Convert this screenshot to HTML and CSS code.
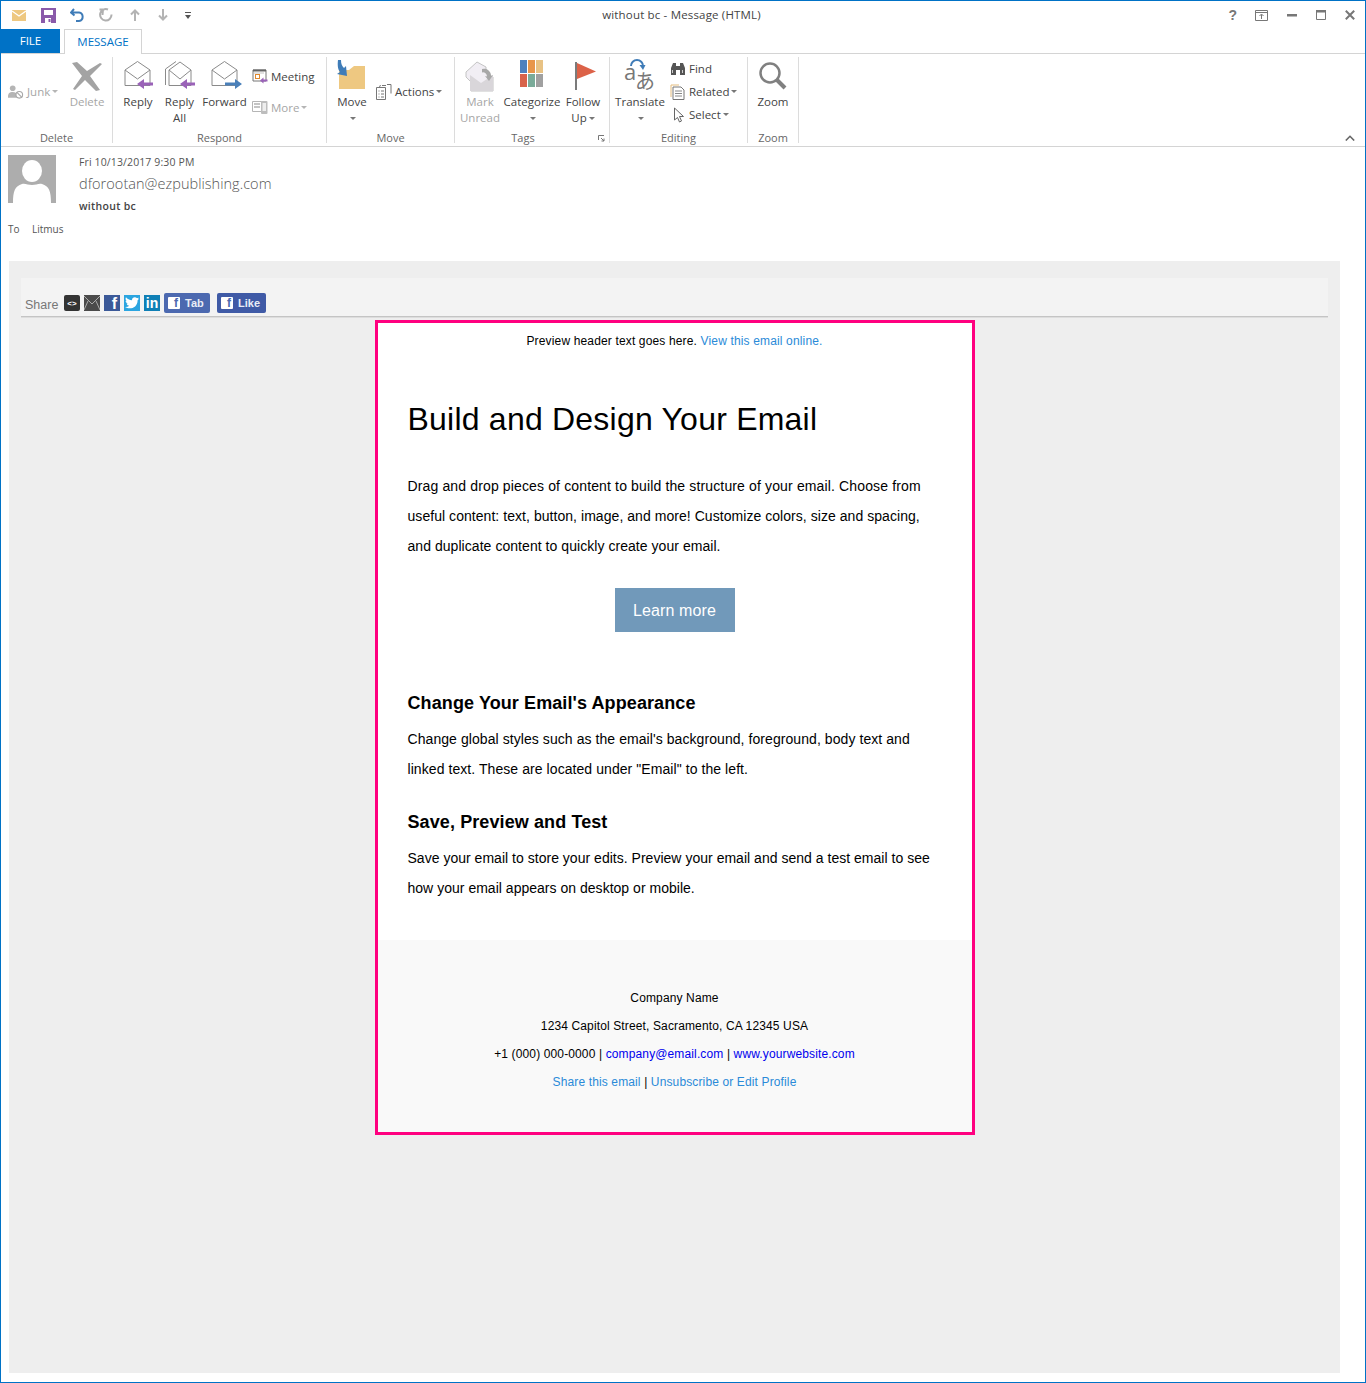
FILE: index.html
```html
<!DOCTYPE html>
<html>
<head>
	<meta charset="UTF-8">
	<title>without bc - Message (HTML)</title>
	<link rel="stylesheet" href="styles.css">
</head>
<body>
<div class="window">
	<div class="titlebar">
		<div class="qat">
			<svg class="qat-env" width="14" height="11" viewBox="0 0 14 11"><rect width="14" height="11" fill="#eec881"/><path d="M0 1l7 5 7-5" fill="none" stroke="#fff" stroke-width="1.3"/></svg>
			<svg class="qat-save" width="15" height="15" viewBox="0 0 15 15"><path d="M0 0h15v15H0z" fill="#8a5aaa"/><rect x="3" y="2" width="9" height="5" fill="#fff"/><rect x="4" y="10" width="6" height="5" fill="#fff"/><rect x="7.500" y="11" width="2" height="3" fill="#8a5aaa"/></svg>
			<svg class="qat-undo" width="15" height="14" viewBox="0 0 15 14"><path d="M4 1L1 4.500l3.500 3M1.500 4.500H9a4.300 4.300 0 0 1 0 8.500H6" fill="none" stroke="#3f7cb8" stroke-width="2"/></svg>
			<svg class="qat-redo" width="14" height="14" viewBox="0 0 14 14"><path d="M9 1.500a5.700 5.700 0 1 0 3.500 5M4 1.500L3.500 7M4 1.500h-3.500" fill="none" stroke="#b0b0b0" stroke-width="2"/></svg>
			<svg class="qat-arrow" width="10" height="12" viewBox="0 0 10 12"><path d="M5 12V1.500M1 5.500l4-4 4 4" fill="none" stroke="#b4b4b4" stroke-width="2"/></svg>
			<svg class="qat-arrow" width="10" height="12" viewBox="0 0 10 12"><path d="M5 0v10.500M1 6.500l4 4 4-4" fill="none" stroke="#b4b4b4" stroke-width="2"/></svg>
			<svg class="qat-more" width="6" height="7" viewBox="0 0 6 7"><path d="M0 0h6v1H0zM0 3h6L3 7z" fill="#555"/></svg>
		</div>
		<div class="doc-title">without bc - Message (HTML)</div>
		<div class="winctl">
			<span class="help">?</span>
			<svg width="13" height="11" viewBox="0 0 13 11"><path d="M.5.500h12v10H.5zM.5 2.500h12M6.500 9V4.500M4.500 6l2-2 2 2" fill="none" stroke="#777"/></svg>
			<svg width="10" height="3" viewBox="0 0 10 3"><rect y="0" width="10" height="2.500" fill="#777"/></svg>
			<svg width="10" height="10" viewBox="0 0 10 10"><path d="M.5.500h9v9h-9z" fill="none" stroke="#777"/><rect width="10" height="2.500" fill="#777"/></svg>
			<svg width="10" height="10" viewBox="0 0 10 10"><path d="M.8.800l8.400 8.400M9.200.800L.8 9.200" stroke="#777" stroke-width="2"/></svg>
		</div>
	</div>

	<div class="tabs">
		<div class="tab-file">FILE</div>
		<div class="tab-message">MESSAGE</div>
	</div>

	<div class="ribbon">
		<div class="group g-delete">
			<div class="group-body">
				<div class="stack w-junk">
					<div class="small off">
						<svg width="16" height="16" viewBox="0 0 17 16"><circle cx="5" cy="4" r="3" fill="#b5b5b5"/><path d="M0 13c0-4 2-5 5-5s4 1 4 3v3H0z" fill="#b5b5b5"/><circle cx="12" cy="11" r="3.500" fill="#fff" stroke="#a8a8a8" stroke-width="1.200"/><path d="M9.500 8.500l5 5" stroke="#a8a8a8" stroke-width="1.200"/></svg>
						<span>Junk</span><i class="caret"></i>
					</div>
				</div>
				<div class="large off w-delete">
					<div class="large-icon"><svg width="32" height="32" viewBox="0 0 32 32"><path d="M1 3l5-1 10 9 13-8 2 1-12 12 10 14-4 1-11-11-10 10-2-1 9-13z" fill="#a3a3a3"/></svg></div>
					<div class="large-text">Delete</div>
				</div>
			</div>
			<div class="group-label">Delete</div>
		</div>

		<div class="group g-respond">
			<div class="group-body">
				<div class="large w-reply">
					<div class="large-icon"><svg class="nudge-r" width="32" height="32" viewBox="0 0 32 32"><path d="M2 10L14.500 1.500 27 10v15.500H2z" fill="#fff" stroke="#8a8a8a"/><path d="M2 10l12.500 9L27 10" fill="none" stroke="#8a8a8a"/><path d="M14 24l7-5v3.500h9v3h-9V29z" fill="#9a62b8"/></svg></div>
					<div class="large-text">Reply</div>
				</div>
				<div class="large w-replyall">
					<div class="large-icon"><svg width="32" height="32" viewBox="0 0 32 32"><path d="M1.500 25V9L12 1.500" fill="none" stroke="#8a8a8a"/><path d="M5 10L16 2l11 8v15.500H5z" fill="#fff" stroke="#8a8a8a"/><path d="M5 10l11 9 11-9" fill="none" stroke="#8a8a8a"/><path d="M16 24l7-5v3.500h8v3h-8V29z" fill="#9a62b8"/></svg></div>
					<div class="large-text">Reply<br>All</div>
				</div>
				<div class="large w-forward">
					<div class="large-icon"><svg class="nudge-f" width="32" height="32" viewBox="0 0 32 32"><path d="M1 10L13.500 1.500 26 10v15.500H1z" fill="#fff" stroke="#8a8a8a"/><path d="M1 10l12.500 9L26 10" fill="none" stroke="#8a8a8a"/><path d="M31 24l-7-5v3.500H14v3h10V29z" fill="#4a80ba"/></svg></div>
					<div class="large-text">Forward</div>
				</div>
				<div class="stack stack-respond">
					<div class="small">
						<svg width="16" height="16" viewBox="0 0 16 16"><path d="M1 2h13v11H1z" fill="#fff" stroke="#777"/><path d="M1 1.500h13v2H1z" fill="#666"/><path d="M3 4.500v1M5 4.500v1M7 4.500v1M9 4.500v1M11 4.500v1" stroke="#888"/><rect x="3.500" y="6.500" width="4" height="4" fill="#fff" stroke="#e0892f"/><path d="M8 12.500l3.500-3v2h4v2h-4v2z" fill="#9a62b8"/></svg>
						<span>Meeting</span>
					</div>
					<div class="small off">
						<svg width="16" height="16" viewBox="0 0 16 16"><path d="M.5 2.500h9v10h-9z" fill="#fff" stroke="#b5b5b5"/><path d="M2 5h6M2 8h6" stroke="#c4c4c4" stroke-width="2"/><rect x="9" y="2" width="6.500" height="13" rx="1" fill="#bdbdbd"/><rect x="10.500" y="4" width="3.500" height="8" fill="#eee"/></svg>
						<span>More</span><i class="caret"></i>
					</div>
				</div>
			</div>
			<div class="group-label">Respond</div>
		</div>

		<div class="group g-move">
			<div class="group-body">
				<div class="large w-move">
					<div class="large-icon"><svg width="32" height="32" viewBox="0 0 32 32"><path d="M3 10h10l5-4h11v23H3z" fill="#eec881"/><path d="M2 0h3c0 4 1 6 3 8l2-2 1 10-10-2 3-2C1.500 9 1.500 4 2 0z" fill="#3f7cb8"/></svg></div>
					<div class="large-text">Move<br><i class="caret"></i></div>
				</div>
				<div class="stack stack-actions">
					<div class="small">
						<svg width="16" height="16" viewBox="0 0 16 16"><path d="M.5 3.500h9v12h-9zM3 2.500l2-1M6 1.500h4M11 .500h4v9" fill="#fff" stroke="#777"/><path d="M2.500 7h1M5 7h3M2.500 10h1M5 10h3M2.500 13h1M5 13h3" stroke="#777"/></svg>
						<span>Actions</span><i class="caret"></i>
					</div>
				</div>
			</div>
			<div class="group-label">Move</div>
		</div>

		<div class="group g-tags">
			<div class="group-body">
				<div class="large off w-mark">
					<div class="large-icon"><svg width="32" height="32" viewBox="0 0 32 32"><path d="M2 12L13 2l9 5v6L29 17v14H7V22l-5-5z" fill="#f1eef4" stroke="#c4c4c4"/><path d="M6 31V15l11 8 12-8v16z" fill="#d9d6da"/><path d="M18 9a7 7 0 0 1 9 7l2-1-4 6-4-5 2 .5a4 4 0 0 0-5-4z" fill="#a8a8a8"/></svg></div>
					<div class="large-text">Mark<br>Unread</div>
				</div>
				<div class="large w-cat">
					<div class="large-icon">
						<div class="swatches">
							<i class="s1"></i><i class="s2"></i><i class="s3"></i>
							<i class="s4"></i><i class="s5"></i><i class="s6"></i>
						</div>
					</div>
					<div class="large-text">Categorize<br><i class="caret"></i></div>
				</div>
				<div class="large w-follow">
					<div class="large-icon"><svg width="32" height="32" viewBox="0 0 32 32"><rect x="8" y="2" width="2" height="28" fill="#7b7b7b"/><path d="M10 3l19 8.500L10 19z" fill="#dc6248"/></svg></div>
					<div class="large-text">Follow<br>Up<i class="caret"></i></div>
				</div>
			</div>
			<div class="group-label">Tags</div>
			<svg class="launcher" width="7" height="7" viewBox="0 0 7 7"><path d="M.5 5V.500H6M3 3l3 3M6 3.500V6H3.500" fill="none" stroke="#777"/></svg>
		</div>

		<div class="group g-editing">
			<div class="group-body">
				<div class="large w-translate">
					<div class="large-icon"><svg class="translate-icon" width="32" height="32" viewBox="0 0 32 32"><path d="M7 6a6 6 0 0 1 12 0" fill="none" stroke="#3f7cb8" stroke-width="2"/><path d="M15.500 5l6 0-2.500 5z" fill="#3f7cb8"/><text x="0" y="20" class="tr-a">a</text><text x="11" y="29" class="tr-b">あ</text></svg></div>
					<div class="large-text">Translate<br><i class="caret"></i></div>
				</div>
				<div class="stack stack-edit">
					<div class="small">
						<svg width="16" height="14" viewBox="0 0 16 14"><path d="M1 13V6l2-5h3v12zM10 13V1h3l2 5v7z" fill="#555"/><rect x="6" y="4" width="4" height="4" fill="#555"/><path d="M2.500 8v3M12.500 8v3" stroke="#ccc"/></svg>
						<span>Find</span>
					</div>
					<div class="small">
						<svg width="16" height="16" viewBox="0 0 16 16"><path d="M1 13V1h8" fill="none" stroke="#e5bd7e"/><path d="M3 3h8l3 3v9.500H3z" fill="#fff" stroke="#777"/><path d="M5 7h7M5 9.500h7M5 12h7" stroke="#888"/></svg>
						<span>Related</span><i class="caret"></i>
					</div>
					<div class="small">
						<svg width="16" height="16" viewBox="0 0 16 16"><path d="M4.500 1v12l3-2.500 2 4.500 2-1-2-4.500h4z" fill="#fff" stroke="#666"/></svg>
						<span>Select</span><i class="caret"></i>
					</div>
				</div>
			</div>
			<div class="group-label">Editing</div>
		</div>

		<div class="group g-zoom">
			<div class="group-body">
				<div class="large w-zoom">
					<div class="large-icon"><svg class="zoom-icon" width="32" height="32" viewBox="0 0 32 32"><circle cx="14" cy="13" r="9.500" fill="none" stroke="#808080" stroke-width="2.500"/><path d="M21 20l8 8" stroke="#808080" stroke-width="4"/></svg></div>
					<div class="large-text">Zoom</div>
				</div>
			</div>
			<div class="group-label">Zoom</div>
		</div>

		<svg class="collapse" width="10" height="6" viewBox="0 0 10 6"><path d="M.800 5.500L5 1.300l4.200 4.200" fill="none" stroke="#666" stroke-width="1.600"/></svg>
	</div>

	<div class="msg-head">
		<div class="msg-top">
			<div class="avatar"><svg width="48" height="48" viewBox="0 0 48 48"><rect width="48" height="48" fill="#adadad"/><ellipse cx="24" cy="16" rx="10" ry="11" fill="#fff"/><path d="M5 48c0-12 2-17 9-19 3-1 6 1 10 1s7-2 10-1c7 2 9 7 9 19z" fill="#fff"/></svg></div>
			<div class="msg-meta">
				<div class="msg-date">Fri 10/13/2017 9:30 PM</div>
				<div class="msg-from">dforootan@ezpublishing.com</div>
				<div class="msg-subject">without bc</div>
			</div>
		</div>
		<div class="msg-to"><span class="to-label">To</span><span>Litmus</span></div>
	</div>

	<div class="reading">
		<div class="canvas">
			<div class="sharebar">
				<span class="share-word">Share</span>
				<span class="soc soc-code">&lt;&gt;</span>
				<span class="soc soc-mail"><svg width="16" height="16" viewBox="0 0 16 16"><path d="M0 1l8 8 8-8M0 15l4-9M16 15l-4-9" fill="none" stroke="#aaa"/></svg></span>
				<span class="soc soc-fb">f</span>
				<span class="soc soc-tw"><svg width="14" height="12" viewBox="0 0 14 12"><path d="M14 1.500c-.5.300-1 .4-1.600.5.600-.4 1-.900 1.200-1.600-.5.300-1.100.6-1.800.7A2.900 2.900 0 0 0 6.900 3.300C4.500 3.200 2.400 2 1 .3c-.8 1.300-.4 3 .9 3.900-.5 0-.9-.1-1.300-.4 0 1.400 1 2.600 2.300 2.900-.4.100-.9.100-1.300 0 .4 1.200 1.400 2 2.700 2A5.800 5.800 0 0 1 0 10c4.700 3 12.600 1 12.600-6.800.6-.4 1-.9 1.400-1.700z" fill="#fff"/></svg></span>
				<span class="soc soc-in">in</span>
				<span class="fb-btn fb-tab"><b class="fb-f">f</b>Tab</span>
				<span class="fb-btn fb-like"><b class="fb-f">f</b>Like</span>
			</div>

			<div class="email">
				<p class="preview">Preview header text goes here. <a class="link">View this email online.</a></p>
				<h1>Build and Design Your Email</h1>
				<p class="body-text"><span class="wide">Drag and drop pieces of content to build the structure of your email. Choose from</span><br>useful content: text, button, image, and more! Customize colors, size and spacing,<br>and duplicate content to quickly create your email.</p>
				<a class="learn">Learn more</a>
				<h2 class="sub-first">Change Your Email's Appearance</h2>
				<p class="body-text sub-text sub-change">Change global styles such as the email's background, foreground, body text and<br>linked text. These are located under "Email" to the left.</p>
				<h2 class="sub-next">Save, Preview and Test</h2>
				<p class="body-text sub-text">Save your email to store your edits. Preview your email and send a test email to see<br>how your email appears on desktop or mobile.</p>
				<div class="footer">
					<p>Company Name</p>
					<p>1234 Capitol Street, Sacramento, CA 12345 USA</p>
					<p>+1 (000) 000-0000 | <a class="blue">company@email.com</a> | <a class="blue">www.yourwebsite.com</a></p>
					<p><a class="link">Share this email</a> | <a class="link">Unsubscribe or Edit Profile</a></p>
				</div>
			</div>
		</div>
	</div>
</div>
</body>
</html>
```

FILE: styles.css
```css
html{background:#fff;}
body{margin:0;font:12px "Open Sans","Noto Sans",sans-serif;color:#444;}
p,h1,h2{margin:0;}
.window{box-sizing:border-box;width:1366px;height:1383px;border:1px solid #0072c6;background:#fff;overflow:hidden;}

/* title bar */
.titlebar{display:grid;grid-template-columns:1fr auto 1fr;align-items:center;height:28px;}
.qat{display:flex;align-items:center;padding-left:11px;height:28px;}
.qat svg{display:block;flex:none;}
.qat-env{margin-right:15px;}
.qat-save{margin-right:14px;}
.qat-undo{margin-right:14px;}
.qat-redo{margin-right:17px;}
.qat-arrow{margin-right:18px;}
.qat-more{margin-left:-1px;}
.doc-title{padding-right:3px;font-size:11.5px;line-height:28px;letter-spacing:.17px;color:#444;}
.winctl{display:flex;align-items:center;justify-content:flex-end;gap:19px;padding-right:10px;height:28px;}
.winctl svg{display:block;}
.help{font:bold 14px "Liberation Sans",sans-serif;color:#777;margin-right:-1px;}

/* tabs */
.tabs{display:flex;height:25px;border-bottom:1px solid #d4d4d4;box-sizing:border-box;}
.tab-file{width:59px;height:24px;margin-right:4px;background:#0072c6;color:#fff;text-align:center;font-size:11.5px;line-height:24px;}
.tab-message{box-sizing:border-box;width:78px;height:25px;border:1px solid #d4d4d4;border-bottom:0;background:#fff;color:#0072c6;text-align:center;font-size:11.5px;line-height:24px;}

/* ribbon */
.ribbon{box-sizing:border-box;display:flex;height:93px;padding-top:3px;border-bottom:1px solid #d4d4d4;position:relative;}
.group{box-sizing:border-box;position:relative;display:flex;flex-direction:column;height:86px;border-right:1px solid #dcdcdc;}
.g-delete{width:112px;padding-left:7px;}
.g-respond{width:214px;padding-left:5px;}
.g-move{width:128px;padding-left:7px;}
.g-tags{width:155px;padding-left:3px;}
.g-editing{width:138px;padding-left:3px;}
.g-zoom{width:51px;padding-left:0;}
.group-body{display:flex;height:74px;}
.group-label{height:12px;margin-left:-7px;text-align:center;font-size:11px;line-height:14px;color:#666;}
.g-respond .group-label{margin-left:-5px;}
.g-tags .group-label{margin-left:-3px;padding-right:18px;}
.g-editing .group-label{margin-left:-3px;}
.g-zoom .group-label{margin-left:0;}
.launcher{position:absolute;right:4px;bottom:1px;}
.collapse{position:absolute;right:10px;bottom:5px;}

.large{flex:none;text-align:center;font-size:11.5px;line-height:16px;white-space:nowrap;}
.large-icon{display:flex;justify-content:center;height:34px;padding-top:3px;}
.large-icon svg{display:block;flex:none;}
.large-text{height:32px;}
.off{color:#a6a6a6;}
.nudge-r{margin-left:2px;}
.nudge-f{margin-left:4px;}
.zoom-icon{margin-right:2px;}
.translate-icon{overflow:visible;}
.w-delete{width:42px;}
.w-reply{width:40px;}
.w-replyall{width:43px;}
.w-forward{width:47px;}
.w-move{width:36px;}
.w-mark{width:44px;}
.w-cat{width:60px;}
.w-follow{width:42px;}
.w-translate{width:54px;}
.w-zoom{width:50px;}
.w-junk{width:58px;}

.stack{display:flex;flex-direction:column;justify-content:center;gap:8px;height:69px;}
.stack-respond{margin-left:4px;}
.stack-actions{margin-left:6px;}
.stack-edit{gap:0;margin-left:3px;}
.small{display:flex;align-items:center;gap:3px;height:23px;font-size:11.5px;white-space:nowrap;}
.small svg{display:block;flex:none;}

.caret{display:inline-block;width:0;height:0;margin-left:3px;border:3px solid transparent;border-top-color:#777;border-bottom:0;vertical-align:middle;}
.large-text .caret{margin-left:2px;}
.small .caret{margin-left:-1px;}
.off .caret{border-top-color:#b5b5b5;}

.swatches{display:grid;grid-template-columns:repeat(3,7px);grid-template-rows:repeat(2,13px);gap:1px;margin-right:1px;}
.swatches i{display:block;}
.s1{background:#4f81bd;}
.s2{background:#e8964a;}
.s3{background:#e8c284;}
.s4{background:#d8634a;}
.s5{background:#7aab99;}
.s6{background:#a0a0a0;}
.tr-a{font:22px "Open Sans",sans-serif;fill:#777;}
.tr-b{font:20px "Noto Sans CJK JP",sans-serif;fill:#777;}

/* message header */
.msg-head{box-sizing:border-box;height:114px;padding:8px 0 0 7px;}
.msg-top{display:flex;gap:23px;}
.avatar{width:48px;height:48px;}
.avatar svg{display:block;}
.msg-date{font-size:10.5px;line-height:14px;letter-spacing:.12px;color:#555;}
.msg-from{font-size:14.5px;font-weight:300;line-height:30px;letter-spacing:.04px;color:#555;}
.msg-subject{font-size:10.5px;font-weight:600;line-height:14px;letter-spacing:.3px;color:#444;}
.msg-to{margin-top:9px;font-size:10px;line-height:14px;color:#555;}
.to-label{display:inline-block;width:24px;}

/* reading pane */
.reading{padding-left:8px;}
.canvas{box-sizing:border-box;width:1331px;height:1112px;padding:17px 12px 0;background:#eee;}
.sharebar{box-sizing:border-box;display:flex;align-items:flex-end;height:39px;padding:0 0 3px 4px;background:#f3f3f3;border-bottom:1px solid #c4c4c4;box-shadow:0 1px #ddd;font-family:"Liberation Sans",Arial,sans-serif;}
.share-word{width:39px;font-size:12.5px;line-height:16px;color:#777;}
.soc{display:flex;align-items:center;justify-content:center;width:16px;height:16px;margin:0 4px 2px 0;color:#fff;font-weight:700;}
.soc-code{background:#333;border-radius:2px;font-size:8px;}
.soc-mail{background:#4a4a4a;}
.soc-fb{background:#3b5998;font-size:16px;align-items:flex-end;justify-content:flex-end;padding-right:3px;box-sizing:border-box;line-height:15px;}
.soc-tw{background:#2ba5e0;}
.soc-in{background:#0f7fb5;font-size:14px;}
.fb-btn{box-sizing:border-box;display:flex;align-items:center;height:20px;border-radius:2px;color:#e8ecf6;font-size:11px;font-weight:700;}
.fb-tab{width:46px;margin-right:7px;padding-left:4px;background:#4c69b0;}
.fb-like{width:49px;padding-left:4px;background:#3f5aa6;}
.fb-f{display:flex;align-items:flex-end;justify-content:flex-end;box-sizing:border-box;width:12px;height:12px;margin-right:5px;padding-right:2px;background:#fff;border-radius:1px;color:#4c69b0;font-size:12px;line-height:12px;}

/* email */
.email{box-sizing:border-box;width:600px;height:815px;margin:3px auto 0;border:3px solid #ff007f;background:#fff;font-family:"Liberation Sans",Arial,sans-serif;color:#000;}
.preview{padding-top:10px;text-align:center;font-size:12px;line-height:16px;letter-spacing:.15px;}
.link{color:#2a8ad8;}
.blue{color:#0000ee;}
.email h1{margin:50px 30px 0;font-size:32px;font-weight:400;line-height:40px;letter-spacing:.22px;}
.body-text{margin:32px 30px 0;font-size:14px;line-height:30px;letter-spacing:.05px;}
.wide{letter-spacing:.14px;}
.learn{display:block;width:120px;height:44px;margin:27px auto 0;background:#7199ba;color:#fff;text-align:center;font-size:16px;line-height:45px;letter-spacing:.1px;}
.email h2{margin:0 30px;font-size:18px;font-weight:700;line-height:24px;letter-spacing:.1px;}
.email .sub-first{margin-top:59px;}
.email .sub-next{margin-top:26px;}
.sub-text{margin-top:9px;letter-spacing:.02px;}
.sub-change{letter-spacing:.07px;}
.footer{box-sizing:border-box;height:192px;margin-top:37px;padding-top:44px;background:#f9f9f9;text-align:center;font-size:12px;line-height:28px;letter-spacing:.13px;}
```
